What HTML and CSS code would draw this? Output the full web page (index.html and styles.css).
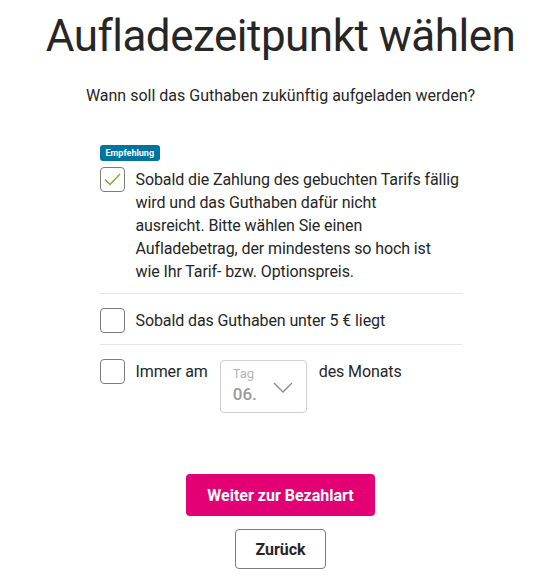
FILE: index.html
```html
<!DOCTYPE html>
<html lang="de">
<head>
    <meta charset="UTF-8">
    <meta name="viewport" content="width=device-width, initial-scale=1.0">
    <title>Aufladezeitpunkt wählen</title>
    <link rel="stylesheet" href="styles.css">
</head>
<body>
    <div class="page">
        <h1 class="title">Aufladezeitpunkt wählen</h1>
        <p class="lead">Wann soll das Guthaben zukünftig aufgeladen werden?</p>

        <div class="options">
            <div class="option">
                <span class="badge">Empfehlung</span>
                <label class="choice">
                    <span class="box">
                        <svg width="17" height="13" viewBox="0 0 17 13"><path d="M1 6.5 L6 11.5 L16 1" fill="none" stroke="#6cb42c" stroke-width="1.3"/></svg>
                    </span>
                    <span class="text">Sobald die Zahlung des gebuchten Tarifs fällig<br>wird und das Guthaben dafür nicht<br>ausreicht. Bitte wählen Sie einen<br>Aufladebetrag, der mindestens so hoch ist<br>wie Ihr Tarif- bzw. Optionspreis.</span>
                </label>
            </div>

            <div class="option">
                <label class="choice">
                    <span class="box"></span>
                    <span class="text">Sobald das Guthaben unter 5 € liegt</span>
                </label>
            </div>

            <div class="option">
                <label class="choice">
                    <span class="box"></span>
                    <span class="text">Immer am</span>
                    <span class="day-select">
                        <span class="day-label">Tag</span>
                        <span class="day-value">06.</span>
                        <svg class="chevron" width="20" height="11" viewBox="0 0 20 11"><path d="M1 1 L10 10 L19 1" fill="none" stroke="#8a8a8a" stroke-width="1.3"/></svg>
                    </span>
                    <span class="text">des Monats</span>
                </label>
            </div>
        </div>

        <div class="actions">
            <button class="btn btn-primary">Weiter zur Bezahlart</button>
            <button class="btn btn-secondary">Zurück</button>
        </div>
    </div>
</body>
</html>
```

FILE: styles.css
```css
body {
    font-family: Roboto, "Liberation Sans", sans-serif;
    background-color: #fff;
    color: #262626;
    margin: 0;
    padding: 0;
}
.page {
    width: 521px;
    margin-left: 20px;
    display: flex;
    flex-direction: column;
    align-items: center;
}
.title {
    font-size: 44px;
    font-weight: 400;
    line-height: 56px;
    margin: 8px 0 0;
    letter-spacing: -0.5px;
}
.lead {
    font-size: 16px;
    line-height: 22px;
    margin: 21px 0 0;
}
.options {
    width: 362px;
    margin-top: 34px;
}
.option {
    padding: 14px 0 11px;
    border-bottom: 1px solid #e6e6e6;
}
.option:first-child {
    padding-top: 0;
    padding-bottom: 10px;
}
.option:last-child {
    border-bottom: none;
}
.badge {
    display: inline-block;
    background-color: #00739f;
    color: #fff;
    font-size: 9px;
    font-weight: 700;
    line-height: 16px;
    padding: 0 6px;
    border-radius: 3px;
    margin-bottom: 6px;
}
.choice {
    display: flex;
    align-items: flex-start;
    gap: 11px;
}
.box {
    flex: none;
    width: 23px;
    height: 23px;
    border: 1px solid #7c7c7c;
    border-radius: 4px;
    display: flex;
    align-items: center;
    justify-content: center;
}
.text {
    font-size: 16px;
    line-height: 23px;
    padding-top: 1px;
    letter-spacing: -0.1px;
    white-space: nowrap;
}
.day-select {
    position: relative;
    flex: none;
    width: 85px;
    height: 51px;
    border: 1px solid #cfcfcf;
    border-radius: 4px;
    margin: 1px 1px 0;
}
.day-label {
    position: absolute;
    left: 12px;
    top: 5px;
    font-size: 13px;
    color: #b4b4b4;
}
.day-value {
    position: absolute;
    left: 12px;
    top: 23px;
    font-size: 17px;
    font-weight: 500;
    color: #9a9a9a;
}
.chevron {
    position: absolute;
    left: 52px;
    top: 21px;
}
.actions {
    display: flex;
    flex-direction: column;
    align-items: center;
    gap: 13px;
    margin-top: 50px;
}
.btn {
    font-family: inherit;
    font-size: 16px;
    font-weight: 700;
    border-radius: 4px;
    cursor: pointer;
}
.btn-primary {
    background-color: #e20074;
    color: #fff;
    border: none;
    width: 189px;
    height: 42px;
}
.btn-secondary {
    background-color: #fff;
    color: #262626;
    border: 1px solid #7c7c7c;
    width: 91px;
    height: 40px;
}
```
